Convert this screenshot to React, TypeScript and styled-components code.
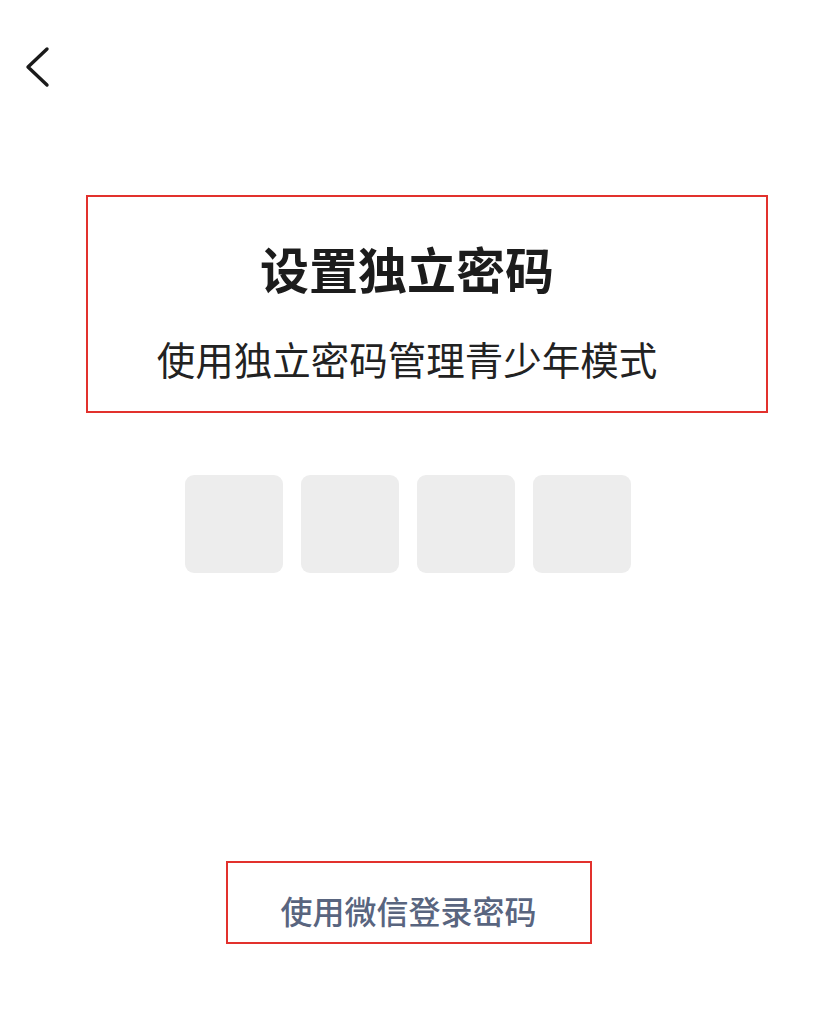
import styled, { createGlobalStyle } from "styled-components";

const GlobalStyle = createGlobalStyle`
  html, body {
    margin: 0;
    padding: 0;
    background: #fff;
    font-family: "Noto Sans CJK SC", "Noto Sans", sans-serif;
  }
`;

const Page = styled.div`
  width: 819px;
  min-height: 1024px;
  display: flex;
  flex-direction: column;
  align-items: center;
  background: #fff;
`;

const Header = styled.div`
  align-self: stretch;
  height: 195px;
  padding: 46px 0 0 24px;
  box-sizing: border-box;
`;

const BackButton = styled.button`
  background: none;
  border: none;
  padding: 0;
  width: 30px;
  height: 42px;
  cursor: pointer;
  color: #1a1a1a;
`;

const IntroBox = styled.div`
  align-self: flex-start;
  margin-left: 86px;
  width: 682px;
  box-sizing: border-box;
  border: 2px solid #e2312d;
  padding: 42px 40px 28px 0;
  display: flex;
  flex-direction: column;
  align-items: center;
  gap: 36px;
`;

const Title = styled.h1`
  margin: 0;
  font-size: 49px;
  line-height: 58px;
  font-weight: 700;
  color: #1c1c1c;
`;

const Subtitle = styled.p`
  margin: 0;
  font-size: 38.5px;
  line-height: 50px;
  font-weight: 400;
  color: #222;
`;

const CodeRow = styled.div`
  margin-top: 62px;
  margin-right: 3px;
  display: flex;
  gap: 18px;
`;

const CodeCell = styled.div`
  width: 98px;
  height: 98px;
  border-radius: 9px;
  background: #ededed;
`;

const SwitchButton = styled.button`
  margin-top: 288px;
  margin-right: 2px;
  width: 366px;
  height: 83px;
  box-sizing: border-box;
  border: 2px solid #e2312d;
  background: #fff;
  padding: 14px 0 0;
  font-family: inherit;
  font-size: 32px;
  line-height: 40px;
  font-weight: 500;
  color: #59657f;
  cursor: pointer;
`;

const App = () => {
  return (
    <>
      <GlobalStyle />
      <Page>
        <Header>
          <BackButton aria-label="返回">
            <svg width="30" height="42" viewBox="0 0 30 42" fill="none">
              <polyline
                points="23,3 4,21 23,39"
                stroke="currentColor"
                strokeWidth="3.4"
                strokeLinecap="round"
                strokeLinejoin="round"
              />
            </svg>
          </BackButton>
        </Header>
        <IntroBox>
          <Title>设置独立密码</Title>
          <Subtitle>使用独立密码管理青少年模式</Subtitle>
        </IntroBox>
        <CodeRow>
          {[0, 1, 2, 3].map((i) => (
            <CodeCell key={i} />
          ))}
        </CodeRow>
        <SwitchButton>使用微信登录密码</SwitchButton>
      </Page>
    </>
  );
};

export default App;
